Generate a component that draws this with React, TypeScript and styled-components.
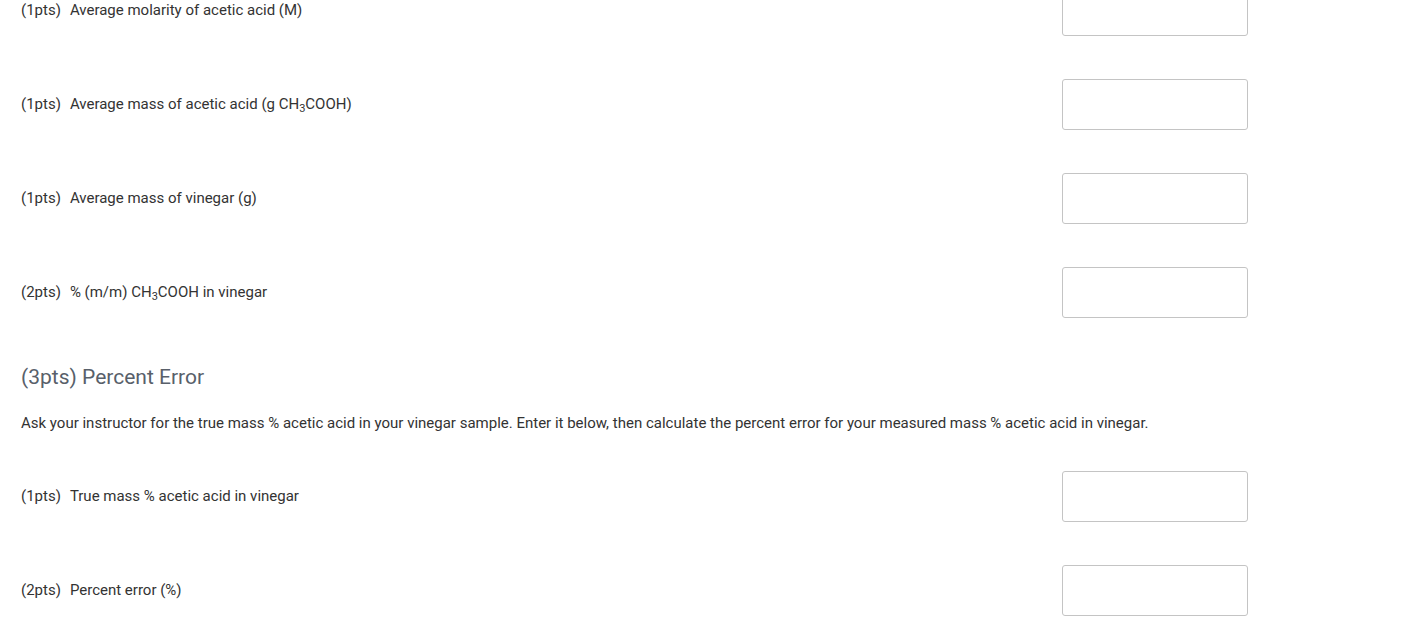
import React from "react";
import styled, { createGlobalStyle } from "styled-components";

const GlobalStyle = createGlobalStyle`
  html, body {
    margin: 0;
    padding: 0;
    background: #ffffff;
  }
  body {
    font-family: Roboto, "Liberation Sans", Arial, sans-serif;
    color: #333333;
    overflow: hidden;
  }
`;

const Page = styled.div`
  padding-left: 21px;
  margin-top: -15px;
  width: 1227px;
`;

const QuestionRow = styled.div`
  display: grid;
  grid-template-columns: 1fr 186px;
  align-items: center;
  height: 51px;
  margin-bottom: 43px;
`;

const Label = styled.div`
  font-size: 15px;
  line-height: 20px;
  padding-bottom: 2px;
  color: #333333;
  white-space: nowrap;
`;

const Points = styled.span`
  display: inline-block;
  margin-right: 9px;
`;

const Sub = styled.sub`
  font-size: 11px;
  vertical-align: -3px;
  line-height: 0;
`;

const AnswerBox = styled.input`
  box-sizing: border-box;
  width: 186px;
  height: 51px;
  border: 1px solid #c4c4c4;
  border-radius: 3px;
  background: #ffffff;
  margin: 0;
  padding: 0 8px;
  font: inherit;
  outline: none;
`;

const SectionHeading = styled.h3`
  margin: 47px 0 24px;
  font-size: 21px;
  line-height: 24px;
  font-weight: 400;
  color: #58606a;
`;

const Instructions = styled.p`
  margin: 0 0 38px;
  font-size: 15px;
  line-height: 20px;
  color: #333333;
  white-space: nowrap;
`;

type Q = { pts: number; label: React.ReactNode };

const Row = ({ pts, label }: Q) => (
  <QuestionRow>
    <Label>
      <Points>({pts}pts)</Points>
      {label}
    </Label>
    <AnswerBox type="text" aria-label="answer" />
  </QuestionRow>
);

const CH3COOH = () => (
  <>
    CH<Sub>3</Sub>COOH
  </>
);

export default function App() {
  return (
    <>
      <GlobalStyle />
      <Page>
        <Row pts={1} label="Average molarity of acetic acid (M)" />
        <Row
          pts={1}
          label={
            <>
              Average mass of acetic acid (g <CH3COOH />)
            </>
          }
        />
        <Row pts={1} label="Average mass of vinegar (g)" />
        <Row
          pts={2}
          label={
            <>
              % (m/m) <CH3COOH /> in vinegar
            </>
          }
        />
        <SectionHeading>(3pts) Percent Error</SectionHeading>
        <Instructions>
          Ask your instructor for the true mass % acetic acid in your vinegar
          sample. Enter it below, then calculate the percent error for your
          measured mass % acetic acid in vinegar.
        </Instructions>
        <Row pts={1} label="True mass % acetic acid in vinegar" />
        <Row pts={2} label="Percent error (%)" />
      </Page>
    </>
  );
}
